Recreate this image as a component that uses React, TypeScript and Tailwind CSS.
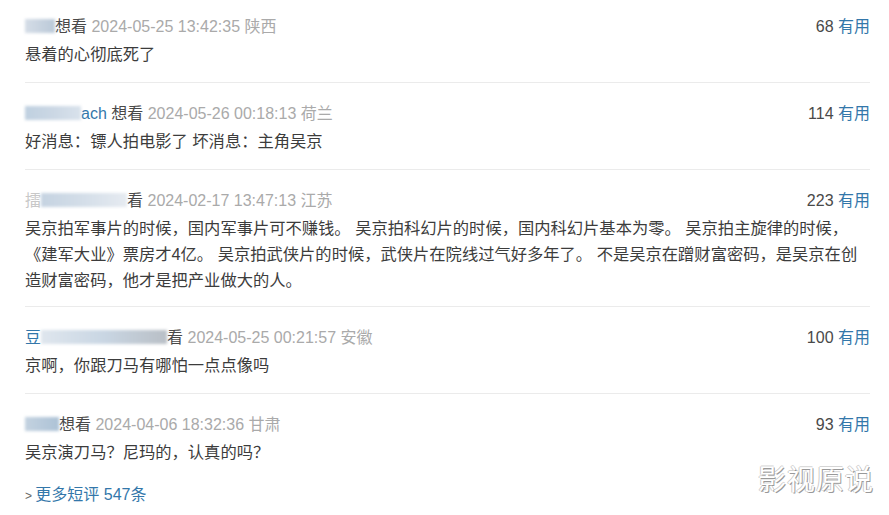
import { ReactNode } from 'react'

type Item = {
  user: ReactNode
  date: string
  place: string
  votes: number
  text: string
}

const blur = 'inline-block h-[14px] align-[-1px] blur-[1.5px]'

const items: Item[] = [
  {
    user: (
      <>
        <span className={`${blur} w-[30px] bg-gradient-to-r from-[#d5dde7] to-[#bac9d8]`} />
        <span className="text-[#494949]">想看</span>
      </>
    ),
    date: '2024-05-25 13:42:35',
    place: '陕西',
    votes: 68,
    text: '悬着的心彻底死了',
  },
  {
    user: (
      <>
        <span className={`${blur} w-[56px] bg-gradient-to-r from-[#bfd0e0] via-[#cbd7e4] to-[#d9e2ec]`} />
        <span className="text-[#3377aa]">ach</span>
        <span className="text-[#494949]"> 想看</span>
      </>
    ),
    date: '2024-05-26 00:18:13',
    place: '荷兰',
    votes: 114,
    text: '好消息：镖人拍电影了 坏消息：主角吴京',
  },
  {
    user: (
      <>
        <span className="text-[#c8c8c8]">擂</span>
        <span className={`${blur} w-[86px] bg-gradient-to-r from-[#c5d3e1] via-[#d4dee9] to-[#e6ebf1]`} />
        <span className="text-[#494949]">看</span>
      </>
    ),
    date: '2024-02-17 13:47:13',
    place: '江苏',
    votes: 223,
    text: '吴京拍军事片的时候，国内军事片可不赚钱。 吴京拍科幻片的时候，国内科幻片基本为零。 吴京拍主旋律的时候，《建军大业》票房才4亿。 吴京拍武侠片的时候，武侠片在院线过气好多年了。 不是吴京在蹭财富密码，是吴京在创造财富密码，他才是把产业做大的人。',
  },
  {
    user: (
      <>
        <span className="text-[#3377aa]">豆</span>
        <span className={`${blur} w-[126px] bg-gradient-to-r from-[#dfe6ee] via-[#c9d6e3] to-[#b9bfc6]`} />
        <span className="text-[#494949]">看</span>
      </>
    ),
    date: '2024-05-25 00:21:57',
    place: '安徽',
    votes: 100,
    text: '京啊，你跟刀马有哪怕一点点像吗',
  },
  {
    user: (
      <>
        <span className={`${blur} w-[34px] bg-gradient-to-r from-[#c3d2e0] to-[#adc2d6]`} />
        <span className="text-[#494949]">想看</span>
      </>
    ),
    date: '2024-04-06 18:32:36',
    place: '甘肃',
    votes: 93,
    text: '吴京演刀马？尼玛的，认真的吗？',
  },
]

export default function App() {
  return (
    <div
      className="relative w-[889px] h-[515px] overflow-hidden bg-white pl-[25px] pr-[19px]"
      style={{ fontFamily: '"Liberation Sans", Arial, "Noto Sans CJK SC", sans-serif' }}
    >
      <div>
        {items.map((it, i) => (
          <div
            key={i}
            className={`pt-[21px] first:pt-[17px] ${
              i === items.length - 1 ? 'pb-[20px]' : i === 2 ? 'border-b border-[#ebebeb] pb-[13px]' : 'border-b border-[#ebebeb] pb-[15px]'
            }`}
          >
            <div className="flex items-center justify-between h-[20px] text-[16px] leading-[20px]">
              <div className="whitespace-nowrap">
                {it.user}
                <span className="text-[#aaaaaa]"> {it.date} {it.place}</span>
              </div>
              <div className="whitespace-nowrap">
                <span className="text-[#494949]">{it.votes}</span>
                <span className="text-[#3377aa]"> 有用</span>
              </div>
            </div>
            <p className="mt-[4px] text-[16.3px] leading-[26px] text-[#3c3c3c] pr-[8px]">{it.text}</p>
          </div>
        ))}
      </div>
      <div className="text-[16px] leading-[20px]">
        <span className="text-[#666] text-[12px]">&gt; </span>
        <span className="text-[#3377aa]">更多短评 547条</span>
      </div>
      <div className="absolute right-[15px] bottom-[18px] text-[28px] leading-[32px] text-white tracking-[1px] [text-shadow:1px_1px_0_#999,-1px_0_0_#ccc,0_-1px_0_#d5d5d5]">
        影视原说
      </div>
    </div>
  )
}
